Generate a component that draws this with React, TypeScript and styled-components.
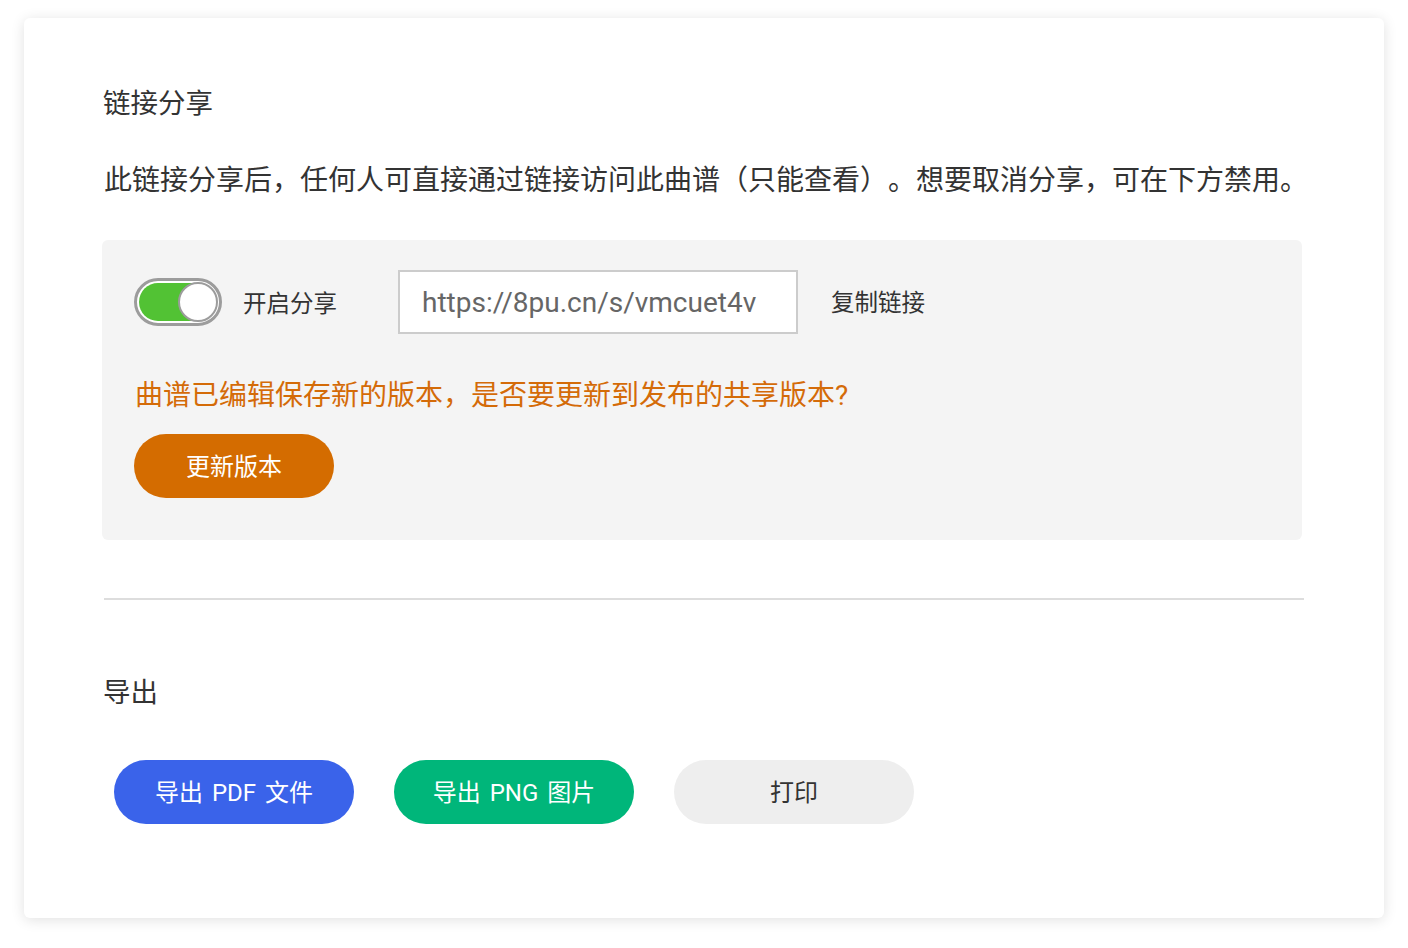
import React, { useState } from 'react';
import styled, { createGlobalStyle } from 'styled-components';

const GlobalStyle = createGlobalStyle`
  html, body {
    margin: 0;
    padding: 0;
    background: #ffffff;
  }
  body {
    font-family: Roboto, "Noto Sans CJK SC", "Noto Sans", sans-serif;
    color: #333;
    text-spacing-trim: space-all;
  }
`;

const Page = styled.div`
  padding: 18px 24px 30px 24px;
`;

const Card = styled.div`
  width: 1360px;
  height: 900px;
  box-sizing: border-box;
  background: #fff;
  border-radius: 6px;
  box-shadow: 0 2px 14px rgba(0, 0, 0, 0.12);
  padding: 70px 80px 0 79px;
`;

const SectionTitle = styled.h2`
  margin: 0;
  font-size: 27.5px;
  font-weight: 400;
  line-height: 32px;
  color: #333;
`;

const Description = styled.p`
  margin: 45px 0 0 1px;
  font-size: 28px;
  line-height: 32px;
  color: #333;
  white-space: nowrap;
`;

const SharePanel = styled.div`
  margin: 43px 0 0 -1px;
  width: 1200px;
  height: 300px;
  box-sizing: border-box;
  background: #f4f4f4;
  border-radius: 6px;
  padding: 30px 32px 0 32px;
`;

const ShareRow = styled.div`
  display: flex;
  align-items: center;
  height: 64px;
`;

const Switch = styled.button<{ $on: boolean }>`
  position: relative;
  width: 88px;
  height: 48px;
  box-sizing: border-box;
  border: 3px solid #9c9c9c;
  border-radius: 24px;
  padding: 2px;
  background: #fff;
  cursor: pointer;
  flex-shrink: 0;
`;

const Track = styled.span<{ $on: boolean }>`
  display: block;
  width: 100%;
  height: 100%;
  border-radius: 20px;
  background: ${(p) => (p.$on ? '#52c234' : '#ddd')};
`;

const Knob = styled.span<{ $on: boolean }>`
  position: absolute;
  top: 1px;
  ${(p) => (p.$on ? 'right: 1px;' : 'left: 1px;')}
  width: 40px;
  height: 40px;
  box-sizing: border-box;
  border-radius: 50%;
  background: #fff;
  border: 2px solid #9c9c9c;
`;

const SwitchLabel = styled.span`
  margin-left: 21px;
  font-size: 23.5px;
  color: #333;
  width: 155px;
`;

const LinkInput = styled.input`
  width: 400px;
  height: 64px;
  box-sizing: border-box;
  border: 2px solid #cccccc;
  background: #fff;
  padding: 0 22px;
  font-family: Roboto, "Noto Sans CJK SC", sans-serif;
  font-size: 28px;
  color: #666;
  outline: none;
`;

const CopyLink = styled.span`
  margin: 0 0 3px 33px;
  font-size: 23.5px;
  color: #333;
  cursor: pointer;
`;

const Notice = styled.p`
  margin: 46px 0 0 1px;
  font-size: 28px;
  line-height: 32px;
  color: #d46b08;
`;

const PillButton = styled.button<{ $bg: string; $fg: string; $w: number }>`
  width: ${(p) => p.$w}px;
  height: 64px;
  border: none;
  border-radius: 32px;
  padding: 0 0 4px 0;
  background: ${(p) => p.$bg};
  color: ${(p) => p.$fg};
  font-family: Roboto, "Noto Sans CJK SC", sans-serif;
  font-size: 24px;
  word-spacing: 3px;
  cursor: pointer;
  flex-shrink: 0;
`;

const UpdateRow = styled.div`
  margin-top: 22px;
`;

const Divider = styled.hr`
  margin: 58px 0 0 1px;
  width: 1200px;
  height: 2px;
  border: none;
  background: #dddddd;
`;

const ExportTitle = styled(SectionTitle)`
  margin-top: 77px;
`;

const ExportRow = styled.div`
  display: flex;
  gap: 40px;
  margin: 51px 0 0 11px;
`;

export default function App() {
  const [on, setOn] = useState(true);
  return (
    <>
      <GlobalStyle />
      <Page>
        <Card>
          <SectionTitle>链接分享</SectionTitle>
          <Description>
            此链接分享后，任何人可直接通过链接访问此曲谱（只能查看）。想要取消分享，可在下方禁用。
          </Description>
          <SharePanel>
            <ShareRow>
              <Switch $on={on} onClick={() => setOn(!on)}>
                <Track $on={on} />
                <Knob $on={on} />
              </Switch>
              <SwitchLabel>开启分享</SwitchLabel>
              <LinkInput readOnly value="https://8pu.cn/s/vmcuet4v" />
              <CopyLink>复制链接</CopyLink>
            </ShareRow>
            <Notice>曲谱已编辑保存新的版本，是否要更新到发布的共享版本?</Notice>
            <UpdateRow>
              <PillButton $bg="#d46c00" $fg="#fff" $w={200}>
                更新版本
              </PillButton>
            </UpdateRow>
          </SharePanel>
          <Divider />
          <ExportTitle>导出</ExportTitle>
          <ExportRow>
            <PillButton $bg="#3a63ea" $fg="#fff" $w={240}>
              导出 PDF 文件
            </PillButton>
            <PillButton $bg="#00b67a" $fg="#fff" $w={240}>
              导出 PNG 图片
            </PillButton>
            <PillButton $bg="#eeeeee" $fg="#333" $w={240}>
              打印
            </PillButton>
          </ExportRow>
        </Card>
      </Page>
    </>
  );
}
